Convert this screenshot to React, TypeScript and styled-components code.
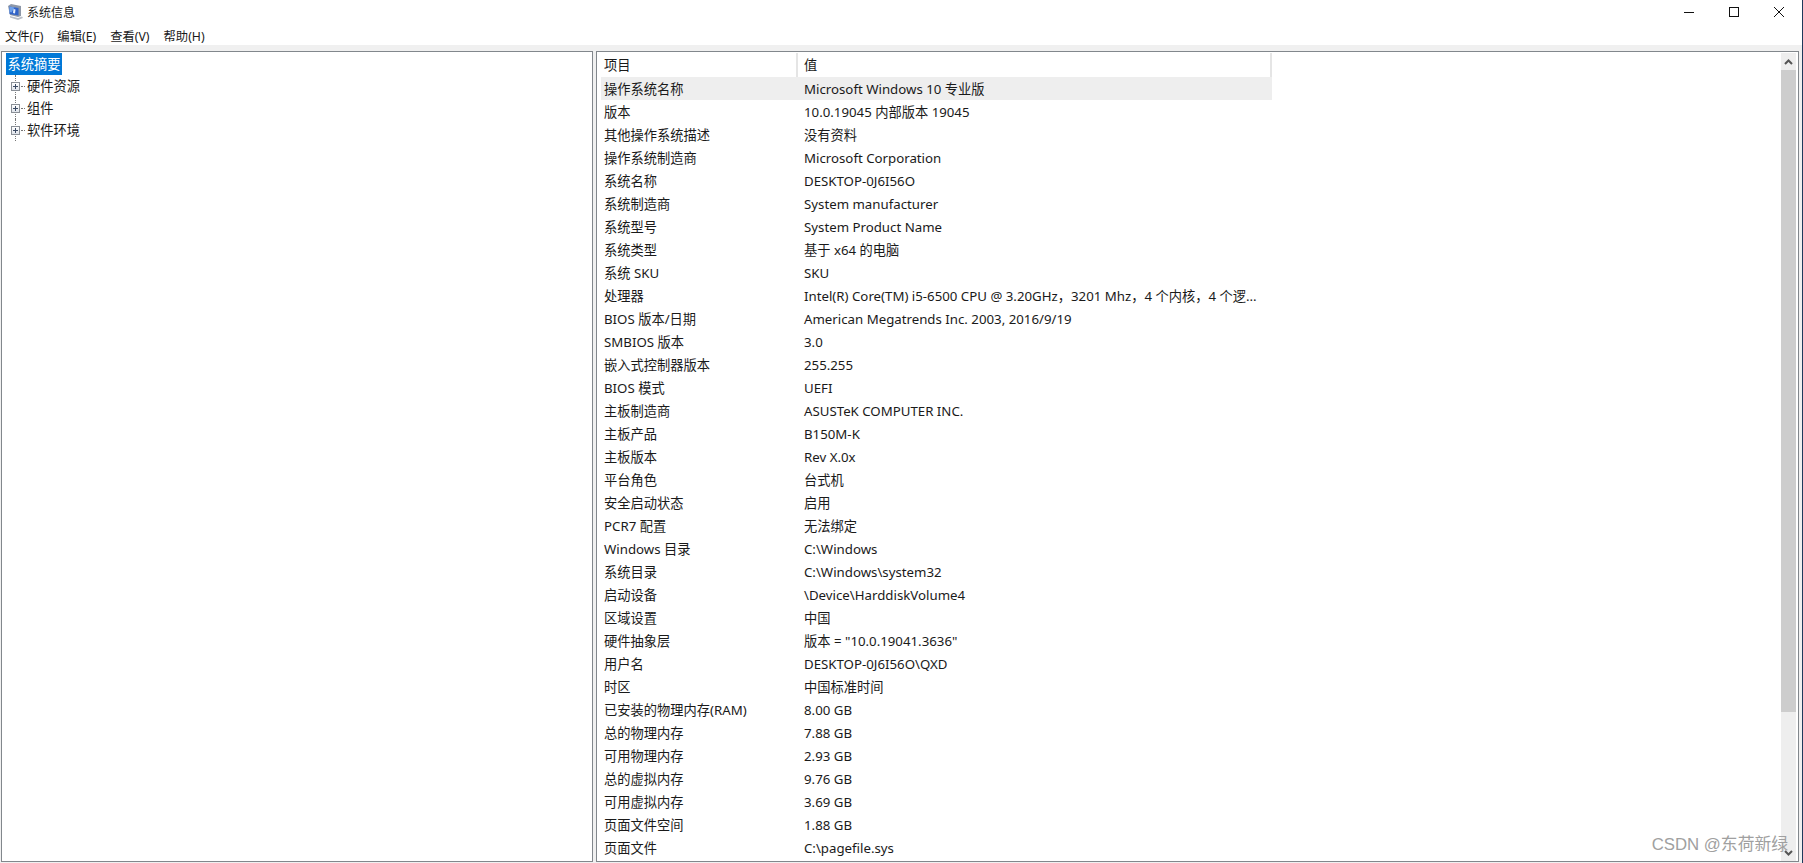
import { createGlobalStyle } from 'styled-components';
import styled from 'styled-components';

const GlobalStyle = createGlobalStyle`
  html, body {
    margin: 0;
    padding: 0;
    background: #fff;
  }
  body {
    width: 1803px;
    height: 863px;
    overflow: hidden;
    font-family: 'Noto Sans', 'Noto Sans CJK SC', sans-serif;
    font-size: 13.25px;
    color: #1a1a1a;
  }
`;

const Window = styled.div`
  position: relative;
  width: 1803px;
  height: 863px;
  box-sizing: border-box;
  border-right: 1px solid #1f3a5c;
  display: flex;
  flex-direction: column;
  overflow: hidden;
`;

const TitleBar = styled.div`
  height: 23px;
  display: flex;
  align-items: center;
  padding-left: 7px;
`;

const TitleText = styled.span`
  flex: 1;
  font-size: 12px;
`;

const WindowButtons = styled.div`
  display: flex;
  align-items: center;
  gap: 33px;
  padding-right: 17px;
`;

const MenuBar = styled.div`
  height: 22px;
  box-sizing: border-box;
  padding: 4px 0 0 5px;
  display: flex;
  align-items: center;
  gap: 14px;
  font-size: 12.3px;
`;

const Body = styled.div`
  flex: 1;
  min-height: 0;
  display: flex;
  gap: 3px;
  background: #f0f0f0;
  padding: 6px 3px 1px 1px;
`;

const Panel = styled.div<{ $width?: number }>`
  box-sizing: border-box;
  background: #fff;
  border: 1px solid #82878c;
  ${(p) => (p.$width ? `width: ${p.$width}px;` : 'flex: 1;')}
  min-width: 0;
  display: flex;
`;

const Tree = styled.div`
  padding: 1px 0 0 4px;
  display: flex;
  flex-direction: column;
`;

const Selected = styled.div`
  width: 56px;
  height: 22px;
  line-height: 22px;
  background: #0078d7;
  color: #fff;
  text-align: center;
  white-space: nowrap;
`;

const TreeRow = styled.div`
  position: relative;
  height: 22px;
  display: flex;
  align-items: center;
  padding-left: 5px;
`;

const TreeLabel = styled.span`
  padding-bottom: 2px;
`;

const Connector = styled.div`
  position: absolute;
  left: 9px;
  top: 0;
  bottom: 0;
  border-left: 1px dotted #777;
`;

const Expander = styled.span`
  position: relative;
  z-index: 1;
  width: 9px;
  height: 9px;
  box-sizing: border-box;
  border: 1px solid #8a8f96;
  background: linear-gradient(#fff, #dfe3ea);
  display: block;

  &::before {
    content: '';
    position: absolute;
    left: 1px;
    right: 1px;
    top: 3px;
    height: 1px;
    background: #3b4a63;
  }
  &::after {
    content: '';
    position: absolute;
    top: 1px;
    bottom: 1px;
    left: 3px;
    width: 1px;
    background: #3b4a63;
  }
`;

const Dash = styled.span`
  width: 4px;
  margin: 0 2px 0 1px;
  border-top: 1px dotted #777;
`;

const TableArea = styled.div`
  flex: 1;
  min-width: 0;
  padding-left: 4px;
`;

const Table = styled.div`
  width: 671px;
  display: flex;
  flex-direction: column;
`;

const HeaderRow = styled.div`
  height: 25px;
  display: grid;
  grid-template-columns: 197px 1fr;
  align-items: center;
`;

const HeaderCell = styled.div`
  height: 24px;
  line-height: 24px;
  padding-left: 3px;
  border-right: 2px solid #e5e5e5;
  margin-top: 1px;

  & + & {
    padding-left: 6px;
  }
`;

const Row = styled.div<{ $active?: boolean }>`
  height: 23px;
  display: grid;
  grid-template-columns: 200px 1fr;
  align-items: center;
  padding-left: 3px;
  background: ${(p) => (p.$active ? '#eeeeee' : 'transparent')};
`;

const Cell = styled.span`
  white-space: nowrap;
  line-height: 22px;
`;

const Scrollbar = styled.div`
  width: 15px;
  margin: 1px 2px 0 0;
  background: #eeeeee;
  display: flex;
  flex-direction: column;
  align-items: stretch;
`;

const ScrollButton = styled.div`
  height: 17px;
  display: flex;
  align-items: center;
  justify-content: center;
  flex: none;
`;

const ScrollThumb = styled.div`
  height: 642px;
  background: #cdcdcd;
  flex: none;
`;

const ScrollSpacer = styled.div`
  flex: 1;
`;

const Watermark = styled.div`
  position: absolute;
  right: 14px;
  bottom: 8px;
  font-size: 16.8px;
  color: #a0a0a0;
  font-family: 'Liberation Sans', 'Noto Sans CJK SC', sans-serif;
`;

const rows: [string, string][] = [
  ['操作系统名称', 'Microsoft Windows 10 专业版'],
  ['版本', '10.0.19045 内部版本 19045'],
  ['其他操作系统描述', '没有资料'],
  ['操作系统制造商', 'Microsoft Corporation'],
  ['系统名称', 'DESKTOP-0J6I56O'],
  ['系统制造商', 'System manufacturer'],
  ['系统型号', 'System Product Name'],
  ['系统类型', '基于 x64 的电脑'],
  ['系统 SKU', 'SKU'],
  ['处理器', 'Intel(R) Core(TM) i5-6500 CPU @ 3.20GHz，3201 Mhz，4 个内核，4 个逻...'],
  ['BIOS 版本/日期', 'American Megatrends Inc. 2003, 2016/9/19'],
  ['SMBIOS 版本', '3.0'],
  ['嵌入式控制器版本', '255.255'],
  ['BIOS 模式', 'UEFI'],
  ['主板制造商', 'ASUSTeK COMPUTER INC.'],
  ['主板产品', 'B150M-K'],
  ['主板版本', 'Rev X.0x'],
  ['平台角色', '台式机'],
  ['安全启动状态', '启用'],
  ['PCR7 配置', '无法绑定'],
  ['Windows 目录', 'C:\\Windows'],
  ['系统目录', 'C:\\Windows\\system32'],
  ['启动设备', '\\Device\\HarddiskVolume4'],
  ['区域设置', '中国'],
  ['硬件抽象层', '版本 = "10.0.19041.3636"'],
  ['用户名', 'DESKTOP-0J6I56O\\QXD'],
  ['时区', '中国标准时间'],
  ['已安装的物理内存(RAM)', '8.00 GB'],
  ['总的物理内存', '7.88 GB'],
  ['可用物理内存', '2.93 GB'],
  ['总的虚拟内存', '9.76 GB'],
  ['可用虚拟内存', '3.69 GB'],
  ['页面文件空间', '1.88 GB'],
  ['页面文件', 'C:\\pagefile.sys'],
];

const treeItems = ['硬件资源', '组件', '软件环境'];
const menus = ['文件(F)', '编辑(E)', '查看(V)', '帮助(H)'];

function AppIcon() {
  return (
    <svg width="20" height="18" viewBox="0 0 20 18">
      <path d="M1 3l3-2 10 2v10l-3 1-8-2z" fill="#8d97a8" />
      <path d="M2.5 3.5l9 1.5v7.5l-9-1.5z" fill="#2f62c8" />
      <path d="M2.5 3.5l5 1-3 5-2-.5z" fill="#6ea0ea" />
      <path d="M6.5 6l2 .4-.5 4-2-.4z" fill="#e6eefa" />
      <path d="M3 13l8 2 4-1.5 1 1.5-5 2-8-2.5z" fill="#b9bec7" />
    </svg>
  );
}

export default function App() {
  return (
    <Window>
      <GlobalStyle />
      <TitleBar>
        <AppIcon />
        <TitleText>系统信息</TitleText>
        <WindowButtons>
          <svg width="12" height="12" viewBox="0 0 12 12">
            <path d="M1 6.5h10" stroke="#111" strokeWidth="1" />
          </svg>
          <svg width="12" height="12" viewBox="0 0 12 12">
            <rect x="1.5" y="1.5" width="9" height="9" fill="none" stroke="#111" />
          </svg>
          <svg width="12" height="12" viewBox="0 0 12 12">
            <path d="M1 1l10 10M11 1L1 11" stroke="#111" strokeWidth="1" />
          </svg>
        </WindowButtons>
      </TitleBar>
      <MenuBar>
        {menus.map((m) => (
          <span key={m}>{m}</span>
        ))}
      </MenuBar>
      <Body>
        <Panel $width={592}>
          <Tree>
            <Selected>系统摘要</Selected>
            {treeItems.map((t) => (
              <TreeRow key={t}>
                <Connector />
                <Expander />
                <Dash />
                <TreeLabel>{t}</TreeLabel>
              </TreeRow>
            ))}
          </Tree>
        </Panel>
        <Panel>
          <TableArea>
            <Table>
              <HeaderRow>
                <HeaderCell>项目</HeaderCell>
                <HeaderCell>值</HeaderCell>
              </HeaderRow>
              {rows.map(([k, v], i) => (
                <Row key={k} $active={i === 0}>
                  <Cell>{k}</Cell>
                  <Cell>{v}</Cell>
                </Row>
              ))}
            </Table>
          </TableArea>
          <Scrollbar>
            <ScrollButton>
              <svg width="9" height="6" viewBox="0 0 9 6">
                <path d="M1 5l3.5-3.5L8 5" fill="none" stroke="#555" strokeWidth="2" />
              </svg>
            </ScrollButton>
            <ScrollThumb />
            <ScrollSpacer />
            <ScrollButton>
              <svg width="9" height="6" viewBox="0 0 9 6">
                <path d="M1 1l3.5 3.5L8 1" fill="none" stroke="#555" strokeWidth="2" />
              </svg>
            </ScrollButton>
          </Scrollbar>
        </Panel>
      </Body>
      <Watermark>CSDN @东荷新绿</Watermark>
    </Window>
  );
}
